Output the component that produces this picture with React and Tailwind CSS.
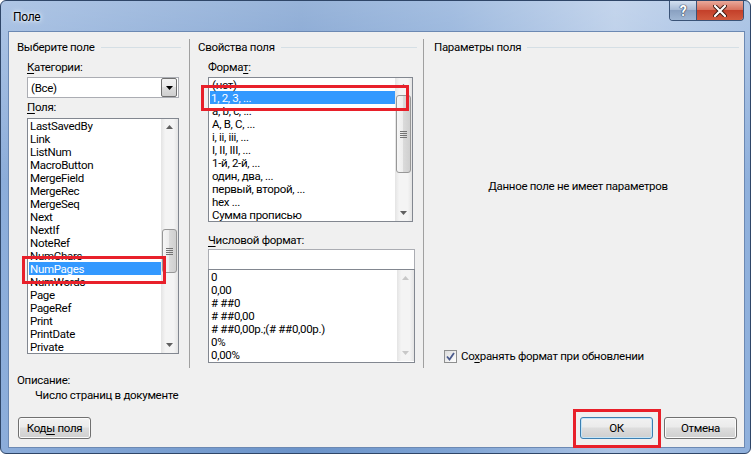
import React from 'react';

const fields = [
  'LastSavedBy', 'Link', 'ListNum', 'MacroButton', 'MergeField', 'MergeRec', 'MergeSeq',
  'Next', 'NextIf', 'NoteRef', 'NumChars', 'NumPages', 'NumWords', 'Page', 'PageRef',
  'Print', 'PrintDate', 'Private',
];

const formats = [
  '(нет)', '1, 2, 3, ...', 'a, b, c, ...', 'A, B, C, ...', 'i, ii, iii, ...', 'I, II, III, ...',
  '1-й, 2-й, ...', 'один, два, ...', 'первый, второй, ...', 'hex ...', 'Сумма прописью',
];

const numFormats = ['0', '0,00', '# ##0', '# ##0,00', '# ##0,00р.;(# ##0,00р.)', '0%', '0,00%'];

const Arrow = ({ down, color }) => (
  <svg width="7" height="4" viewBox="0 0 7 4">
    <path d={down ? 'M0 0 L7 0 L3.5 4Z' : 'M0 4 L3.5 0 L7 4Z'} fill={color} />
  </svg>
);

const Scrollbar = ({ thumbClass, dim }) => {
  const color = dim ? '#c8c8c8' : '#606060';
  return (
    <div className="flex w-[17px] flex-col bg-[linear-gradient(90deg,#e4e4e4,#f4f4f4_25%,#f4f4f4_75%,#e4e4e4)]">
      <div className="flex h-[16px] items-center justify-center">
        <Arrow color={color} />
      </div>
      <div className="flex flex-1 flex-col">
        {thumbClass && (
          <div className={`mx-[1px] flex flex-col items-center justify-center gap-[1px] rounded-[3px] border border-[#979797] bg-[linear-gradient(90deg,#f6f6f6,#ececec_50%,#dadada_50%,#cfcfcf)] ${thumbClass}`}>
            <div className="h-px w-[7px] bg-[#737373]" />
            <div className="h-px w-[7px] bg-[#737373]" />
            <div className="h-px w-[7px] bg-[#737373]" />
            <div className="h-px w-[7px] bg-[#737373]" />
          </div>
        )}
      </div>
      <div className="flex h-[16px] items-center justify-center">
        <Arrow down color={color} />
      </div>
    </div>
  );
};

const ListBox = ({ items, selected, className, thumbClass, dim, pad }) => (
  <div className={`flex border border-[#828790] bg-white ${className}`}>
    <div className="flex-1 overflow-hidden">
      {items.map((it, i) => (
        <div
          key={i}
          className={`h-[13px] whitespace-nowrap leading-[15px] ${
            i === selected ? 'ml-[1px] bg-[#3399ff] pl-[1px] text-white' : pad
          }`}
        >
          {it}
        </div>
      ))}
    </div>
    <Scrollbar thumbClass={thumbClass} dim={dim} />
  </div>
);

const GroupHeader = ({ title, className }) => (
  <div className={`flex h-[16px] items-center ${className}`}>
    <span className="whitespace-nowrap">{title}</span>
    <div className="ml-[6px] h-px flex-1 bg-[#d5dfe5]" />
  </div>
);

const Button = ({ children, def, className = '' }) => (
  <div
    className={`flex h-[22px] w-[73px] items-center justify-center rounded-[3px] border bg-[linear-gradient(180deg,#f2f2f2,#ebebeb_45%,#dddddd_50%,#cfcfcf)] ${
      def ? 'border-[#3c7fb1] shadow-[inset_0_0_0_1px_#c4e5f8]' : 'border-[#707070] shadow-[inset_0_0_0_1px_#fbfbfb]'
    } ${className}`}
  >
    {children}
  </div>
);

const TitleBar = () => (
  <div className="flex h-[30px] items-start justify-between">
    <div className="pl-[12px] pt-[8px] text-[12px] leading-[16px] text-black [text-shadow:0_0_6px_#ffffff,0_0_3px_#ffffff]">Поле</div>
    <div className="mr-[6px] flex h-[20px] overflow-hidden rounded-b-[4px] border border-t-0 border-[#3a5377]">
      <div className="flex w-[27px] items-center justify-center border-r border-[#3a5377] bg-[linear-gradient(180deg,#d3e0f0,#a9bcd6_45%,#8aa1c1_50%,#9fb6d3)]">
        <span className="text-[14px] font-bold leading-[14px] text-white [text-shadow:0_0_1px_#2e3e56,0_0_1px_#2e3e56,0_0_1px_#2e3e56]">?</span>
      </div>
      <div className="flex w-[46px] items-center justify-center bg-[linear-gradient(180deg,#e9a99b,#d8735f_45%,#c4402a_50%,#d25a3e)]">
        <svg width="14" height="12" viewBox="0 0 14 12">
          <path d="M2 1 L12 11 M12 1 L2 11" stroke="#3b1a12" strokeWidth="4" strokeLinecap="round" />
          <path d="M2 1 L12 11 M12 1 L2 11" stroke="#ffffff" strokeWidth="2.2" strokeLinecap="round" />
        </svg>
      </div>
    </div>
  </div>
);

const Mn = ({ children }) => <span className="underline underline-offset-2">{children}</span>;

export default function App() {
  return (
    <div className="h-[459px] w-[755px] bg-white font-['Segoe_UI',Roboto,sans-serif] text-[11.5px] leading-[16px] tracking-[-0.3px] text-black">
      <div className="relative flex h-[454px] w-[751px] flex-col rounded-[6px] border border-[#2f4668] bg-[linear-gradient(180deg,rgba(255,255,255,0.3),rgba(255,255,255,0)_40%),linear-gradient(90deg,#8cadda,#6b93c9_40%,#7ea3d4_60%,#abc3e4_82%,#8fb0dc)]">
        <TitleBar />
        <div className="mb-[5px] ml-[7px] mr-[5px] flex flex-1 flex-col border border-[#6c89b3] bg-[#f0f0f0]">
          <div className="flex pt-[7px]">
            {/* left column */}
            <div className="flex h-[329px] w-[181px] flex-col border-r border-[#a0a0a0]">
              <GroupHeader title="Выберите поле" className="pl-[8px] pr-[8px]" />
              <div className="mt-[4px] pl-[18px]">
                <Mn>К</Mn>атегории:
              </div>
              <div className="ml-[18px] mt-[2px] flex h-[21px] w-[152px] items-center border border-[#abadb3] bg-white">
                <div className="flex-1 pl-[3px]">(Все)</div>
                <div className="mr-[1px] flex h-[19px] w-[16px] items-center justify-center rounded-[2px] border border-[#707070] bg-[linear-gradient(180deg,#f2f2f2,#ebebeb_45%,#dddddd_50%,#cfcfcf)]">
                  <Arrow down color="#000000" />
                </div>
              </div>
              <div className="mt-[1px] pl-[18px]">
                <Mn>П</Mn>оля:
              </div>
              <ListBox
                items={fields}
                selected={11}
                pad="pl-[2px]"
                className="ml-[18px] mt-[3px] w-[152px]"
                thumbClass="mt-[94px] h-[44px]"
              />
            </div>
            {/* middle column */}
            <div className="flex h-[329px] w-[234px] flex-col border-r border-[#a0a0a0]">
              <GroupHeader title="Свойства поля" className="pl-[8px] pr-[6px]" />
              <div className="mt-[4px] pl-[18px]">
                Форма<Mn>т</Mn>:
              </div>
              <ListBox
                items={formats}
                selected={1}
                pad="pl-[3px]"
                className="ml-[18px] mt-[2px] w-[205px]"
                thumbClass="mt-[1px] h-[78px]"
              />
              <div className="mt-[10px] pl-[18px]">
                <Mn>Ч</Mn>исловой формат:
              </div>
              <div className="ml-[18px] mt-[1px] h-[20px] w-[207px] border border-b-0 border-[#abadb3] bg-white" />
              <ListBox items={numFormats} selected={-1} pad="pl-[2px]" dim className="ml-[18px] w-[207px] pb-px" />
            </div>
            {/* right column */}
            <div className="flex h-[329px] flex-1 flex-col">
              <GroupHeader title="Параметры поля" className="pl-[10px] pr-[5px]" />
              <div className="mt-[123px] pr-[12px] text-center">Данное поле не имеет параметров</div>
              <div className="mt-[154px] flex h-[16px] items-center pl-[20px]">
                <div className="flex h-[13px] w-[13px] items-center justify-center border border-[#8e8f8f] bg-[linear-gradient(135deg,#dcdcdc,#ffffff)]">
                  <svg width="11" height="11" viewBox="0 0 11 11">
                    <path d="M2 5.5 L4.5 8.5 L9 2" fill="none" stroke="#4a5a8c" strokeWidth="1.8" />
                  </svg>
                </div>
                <span className="ml-[4px]">
                  Со<Mn>х</Mn>ранять формат при обновлении
                </span>
              </div>
            </div>
          </div>
          <div className="mt-[5px] pl-[8px] leading-[15px]">Описание:</div>
          <div className="pl-[26px] leading-[15px]">Число страниц в документе</div>
          <div className="mt-[14px] flex items-start pl-[9px] pr-[7px]">
            <Button>
              Код<Mn>ы</Mn>&nbsp;поля
            </Button>
            <div className="flex-1" />
            <Button def>ОК</Button>
            <Button className="ml-[11px]">Отмена</Button>
          </div>
        </div>

        {/* red annotation boxes */}
        <div className="absolute left-[21px] top-[255px] h-[28px] w-[144px] border-[3px] border-[#e8202a]" />
        <div className="absolute left-[200px] top-[84px] h-[26px] w-[208px] border-[3px] border-[#e8202a]" />
        <div className="absolute left-[572px] top-[408px] h-[39px] w-[88px] border-[3px] border-[#e8202a]" />
      </div>
    </div>
  );
}
